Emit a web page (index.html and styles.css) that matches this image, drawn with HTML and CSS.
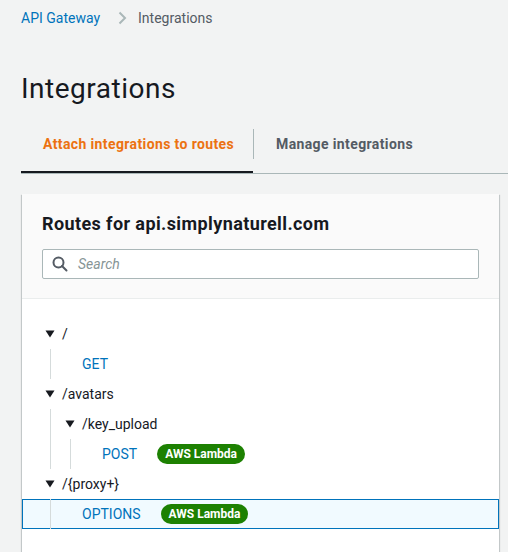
FILE: index.html
```html
<!DOCTYPE html>
<html>
<head>
<meta charset="utf-8">
<link rel="stylesheet" href="styles.css">
</head>
<body>
<nav class="breadcrumb">
  <a class="crumb-link" href="#">API Gateway</a>
  <svg class="crumb-sep" width="16" height="16" viewBox="0 0 16 16"><path d="M5.5 2.5 L11 8 L5.5 13.5" fill="none" stroke="#aab7b8" stroke-width="2"/></svg>
  <span class="crumb-current">Integrations</span>
</nav>
<h1 class="page-title">Integrations</h1>
<div class="tabs">
  <div class="tab tab-active">Attach integrations to routes</div>
  <div class="tab-sep"></div>
  <div class="tab">Manage integrations</div>
</div>
<section class="card">
  <header class="card-header">
    <h2 class="card-title">Routes for api.simplynaturell.com</h2>
    <div class="search">
      <svg class="search-icon" width="16" height="16" viewBox="0 0 16 16"><circle cx="6.5" cy="6.5" r="5" fill="none" stroke="#545b64" stroke-width="2"/><path d="M10 10 L14.5 14.5" stroke="#545b64" stroke-width="2" stroke-linecap="round"/></svg>
      <span class="search-placeholder">Search</span>
    </div>
  </header>
  <div class="tree">
    <div class="row">
      <span class="toggle"><svg width="10" height="8" viewBox="0 0 10 8"><path d="M0.5 0.5 H9.5 L5 7.5 Z" fill="#16191f"/></svg></span>
      <span class="path">/</span>
    </div>
    <div class="row">
      <span class="guide"></span>
      <span class="toggle"></span>
      <span class="method">GET</span>
    </div>
    <div class="row">
      <span class="toggle"><svg width="10" height="8" viewBox="0 0 10 8"><path d="M0.5 0.5 H9.5 L5 7.5 Z" fill="#16191f"/></svg></span>
      <span class="path">/avatars</span>
    </div>
    <div class="row">
      <span class="guide"></span>
      <span class="toggle"><svg width="10" height="8" viewBox="0 0 10 8"><path d="M0.5 0.5 H9.5 L5 7.5 Z" fill="#16191f"/></svg></span>
      <span class="path">/key_upload</span>
    </div>
    <div class="row">
      <span class="guide"></span>
      <span class="guide"></span>
      <span class="toggle"></span>
      <span class="method">POST</span>
      <span class="badge">AWS Lambda</span>
    </div>
    <div class="row">
      <span class="toggle"><svg width="10" height="8" viewBox="0 0 10 8"><path d="M0.5 0.5 H9.5 L5 7.5 Z" fill="#16191f"/></svg></span>
      <span class="path">/{proxy+}</span>
    </div>
    <div class="row row-selected">
      <span class="guide"></span>
      <span class="toggle"></span>
      <span class="method">OPTIONS</span>
      <span class="badge">AWS Lambda</span>
    </div>
  </div>
</section>
</body>
</html>
```

FILE: styles.css
```css
* { box-sizing: border-box; }
html, body { margin: 0; padding: 0; }
body {
  background: #f2f3f3;
  font-family: Roboto, "Noto Sans", Arial, sans-serif;
  color: #16191f;
  font-size: 14px;
  line-height: 20px;
  overflow: hidden;
  height: 552px;
}
.breadcrumb {
  display: flex;
  align-items: center;
  padding: 8px 21px 0;
  height: 28px;
}
.crumb-link { color: #0073bb; text-decoration: none; }
.crumb-sep { margin: 0 8px 0 14px; }
.crumb-current { color: #545b64; }
.page-title {
  margin: 43px 0 0 21px;
  font-size: 28px;
  line-height: 36px;
  font-weight: 400;
  letter-spacing: 0.5px;
  color: #16191f;
}
.tabs {
  display: flex;
  align-items: center;
  margin: 8px 0 0 21px;
  border-bottom: 1px solid #aab7b8;
}
.tab {
  padding: 19px 20px 17px 22px;
  font-weight: 700;
  letter-spacing: 0.38px;
  white-space: nowrap;
  color: #545b64;
  border-bottom: 2px solid transparent;
}
.tab-active {
  color: #ec7211;
  border-bottom-color: #16191f;
  width: 232px;
}
.tab-sep {
  width: 1px;
  height: 30px;
  background: #aab7b8;
}
.card {
  margin: 20px 9px 0 22px;
  background: #fff;
  box-shadow: 0 1px 1px 0 rgba(0,28,36,.3), 1px 1px 1px 0 rgba(0,28,36,.15), -1px 1px 1px 0 rgba(0,28,36,.15);
  height: 400px;
}
.card-header {
  background: #fafafa;
  padding: 19px 20px 19px 20px;
  border-bottom: 1px solid #eaeded;
}
.card-title {
  margin: 0;
  font-size: 18px;
  line-height: 22px;
  font-weight: 700;
  letter-spacing: 0.4px;
  color: #16191f;
}
.search {
  margin-top: 14px;
  height: 30px;
  background: #fff;
  border: 1px solid #aab7b8;
  border-radius: 2px;
  display: flex;
  align-items: center;
  padding-left: 9px;
}
.search-icon { margin-right: 10px; }
.search-placeholder { font-style: italic; color: #879596; }
.tree { padding-top: 20px; }
.row {
  display: flex;
  align-items: center;
  height: 30px;
  padding-left: 17px;
  border: 1px solid transparent;
}
.row-selected {
  background: #f1faff;
  border-color: #0073bb;
}
.guide {
  width: 20px;
  align-self: stretch;
  margin: -1px 0;
  display: flex;
  justify-content: center;
}
.guide::before {
  content: "";
  width: 1px;
  background: #d5dbdb;
  margin-left: 1px;
}
.toggle {
  width: 20px;
  height: 20px;
  display: flex;
  align-items: center;
  justify-content: center;
}
.path { margin-left: 2px; color: #16191f; }
.method { margin-left: 2px; color: #0073bb; }
.badge {
  margin-left: 20px;
  background: #1d8102;
  color: #fff;
  font-size: 12px;
  font-weight: 700;
  line-height: 20px;
  height: 20px;
  padding: 0 8px;
  border-radius: 10px;
}
```
